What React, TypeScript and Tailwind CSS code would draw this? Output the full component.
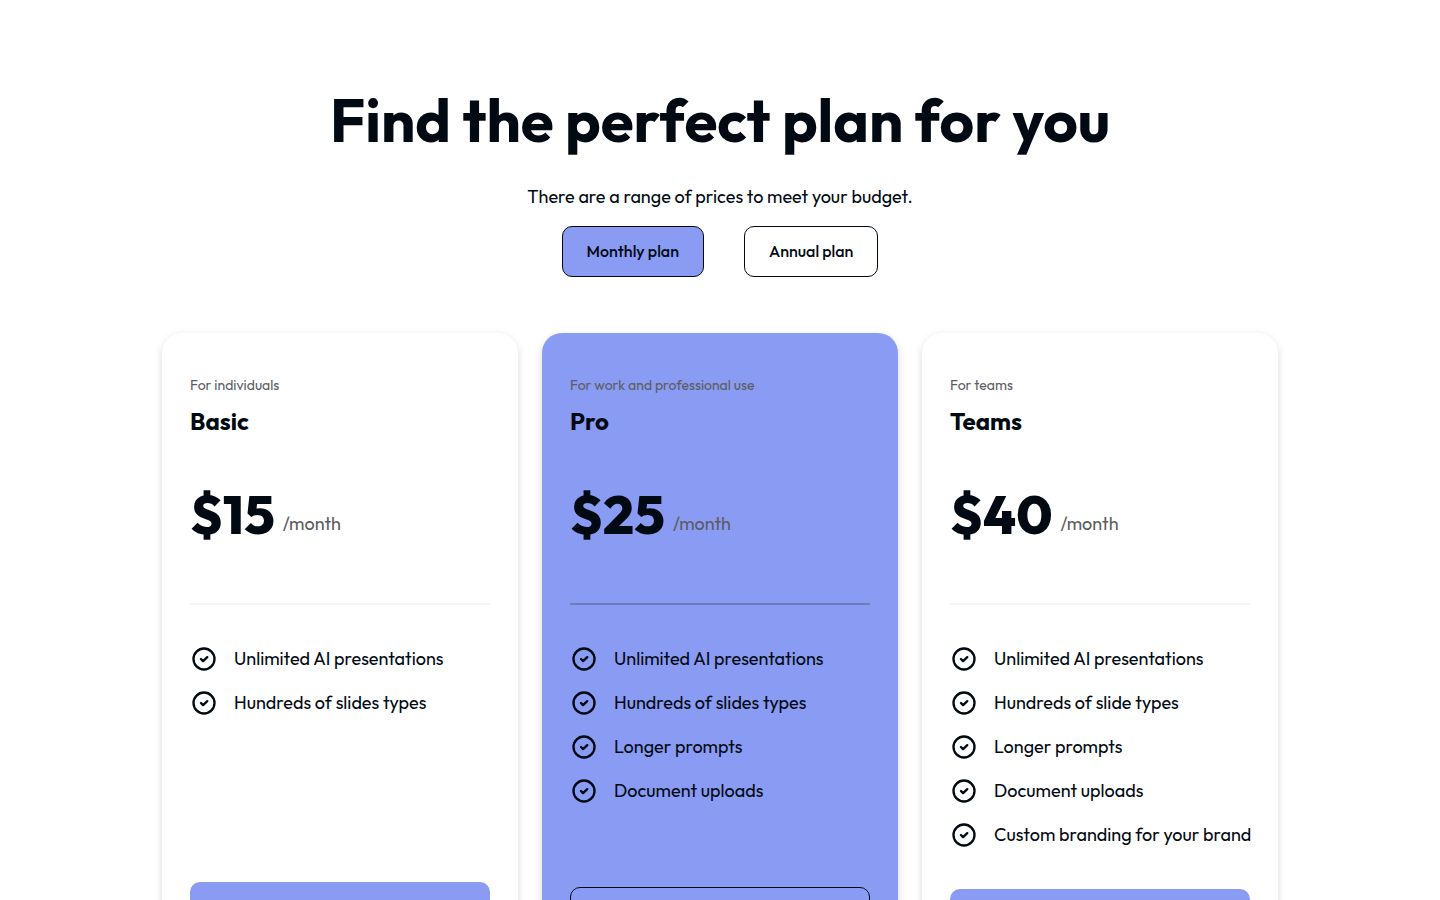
import { useState } from 'react';

type Plan = {
  name: string;
  audience: string;
  price: number;
  features: string[];
  highlighted?: boolean;
  buttonSpacing: string;
};

const PLANS: Plan[] = [
  {
    name: 'Basic',
    audience: 'For individuals',
    price: 15,
    features: ['Unlimited AI presentations', 'Hundreds of slides types'],
    buttonSpacing: 'mb-[7px]'
  },
  {
    name: 'Pro',
    audience: 'For work and professional use',
    price: 25,
    features: ['Unlimited AI presentations', 'Hundreds of slides types', 'Longer prompts', 'Document uploads'],
    highlighted: true,
    buttonSpacing: 'mb-[2px]'
  },
  {
    name: 'Teams',
    audience: 'For teams',
    price: 40,
    features: [
      'Unlimited AI presentations',
      'Hundreds of slide types',
      'Longer prompts',
      'Document uploads',
      'Custom branding for your brand'
    ],
    buttonSpacing: 'mb-0'
  }
];

function CheckIcon() {
  return (
    <svg
      viewBox="0 0 24 24"
      className="h-7 w-7 shrink-0"
      fill="none"
      stroke="currentColor"
      strokeWidth="2"
      strokeLinecap="round"
      strokeLinejoin="round"
      aria-hidden="true"
    >
      <circle cx="12" cy="12" r="9" />
      <path d="M9.4 12L11.2 13.8L14.8 10.4" />
    </svg>
  );
}

function PlanCard({ plan }: { plan: Plan }) {
  return (
    <article
      className={`flex flex-col rounded-[20px] px-7 py-10 shadow-[0_3px_8px_rgba(0,0,0,0.15)] ${
        plan.highlighted ? 'bg-[#8a9bf3]' : 'bg-white'
      }`}
    >
      <p className="text-sm leading-6 text-[#5c5c62]">{plan.audience}</p>
      <h2 className="mt-2 text-2xl leading-8 font-bold">{plan.name}</h2>
      <p className="mt-[42px] flex items-end gap-2">
        <span className="text-[54px] leading-[70px] font-extrabold">${plan.price}</span>
        <span className="pb-[11px] text-lg leading-7 text-[#5c5c62]">/month</span>
      </p>
      <hr className={`mt-[54px] border-t-2 ${plan.highlighted ? 'border-[#6f7bb8]' : 'border-[#f3f3f3]'}`} />
      <ul className="mt-10 flex flex-1 flex-col gap-4">
        {plan.features.map((feature) => (
          <li key={feature} className="flex items-center gap-4 text-lg leading-7">
            <CheckIcon />
            <span className="whitespace-nowrap">{feature}</span>
          </li>
        ))}
      </ul>
      <button
        type="button"
        className={`mt-10 h-12 rounded-[10px] text-base font-medium ${plan.buttonSpacing} ${
          plan.highlighted ? 'border border-[#010a12]' : 'bg-[#8a9bf3]'
        }`}
      >
        Get started
      </button>
    </article>
  );
}

export default function App() {
  const [billing, setBilling] = useState('Monthly');

  return (
    <main className="min-h-screen bg-white px-6 pt-20 pb-20 font-['Outfit','Lato',sans-serif] text-[#010a12]">
      <header className="flex flex-col items-center text-center">
        <h1 className="text-6xl leading-20 font-bold">Find the perfect plan for you</h1>
        <p className="mt-[23px] text-lg leading-7">There are a range of prices to meet your budget.</p>
        <div className="mt-[15px] flex gap-10">
          {['Monthly', 'Annual'].map((period) => (
            <button
              key={period}
              type="button"
              aria-pressed={billing === period}
              onClick={() => setBilling(period)}
              className={`h-[51px] rounded-[10px] border border-[#010a12] px-6 pb-0.5 text-base font-medium ${
                billing === period ? 'bg-[#8a9bf3]' : 'bg-white'
              }`}
            >
              {period} plan
            </button>
          ))}
        </div>
      </header>

      <section className="mx-auto mt-14 grid max-w-[1116px] grid-cols-1 gap-6 lg:grid-cols-3">
        {PLANS.map((plan) => (
          <PlanCard key={plan.name} plan={plan} />
        ))}
      </section>
    </main>
  );
}
